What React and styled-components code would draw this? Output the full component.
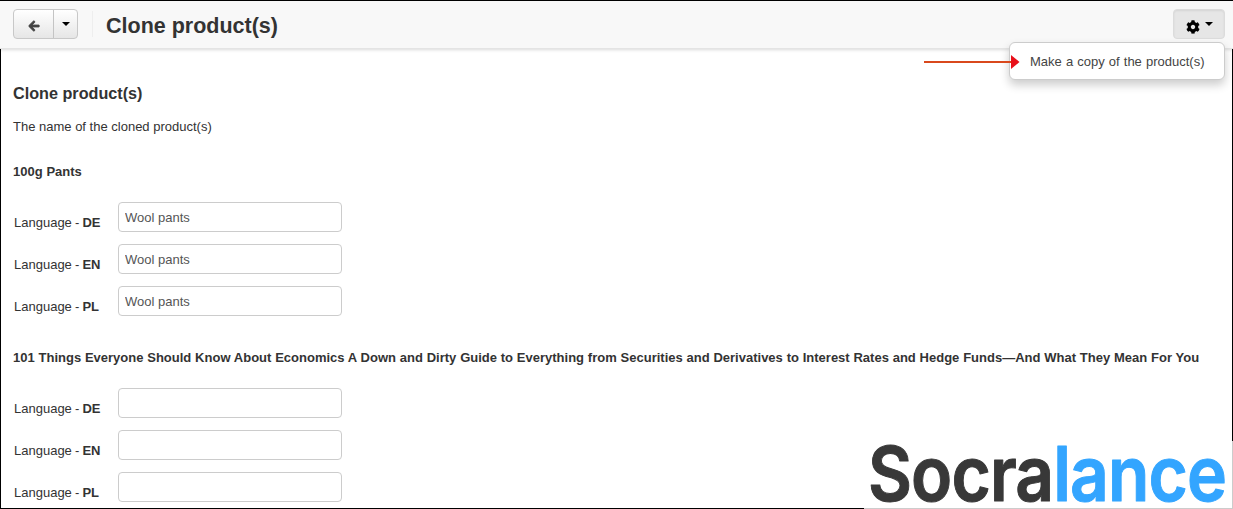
import React from 'react';
import styled, { createGlobalStyle } from 'styled-components';
import { FaArrowLeft, FaCog } from 'react-icons/fa';

const GlobalStyle = createGlobalStyle`
  html, body {
    margin: 0;
    padding: 0;
    background: #fff;
    overflow: hidden;
  }
  body {
    font-family: "Liberation Sans", Arial, sans-serif;
    font-size: 13px;
    color: #333;
  }
`;

const Frame = styled.div`
  position: relative;
  display: flex;
  flex-direction: column;
  box-sizing: border-box;
  width: 1233px;
  height: 509px;
  overflow: hidden;
  border-top: 1px solid #000;
  background: #fff;
`;

const Toolbar = styled.header`
  position: relative;
  display: flex;
  flex: none;
  align-items: center;
  box-sizing: border-box;
  height: 48px;
  padding: 0 8px 2px 13px;
  background: #f8f8f8;
  border-bottom: 1px solid #e4e4e4;
  box-shadow: 0 1px 3px rgba(0, 0, 0, 0.15);
`;

const ButtonGroup = styled.div`
  display: flex;
  height: 30px;
  border: 1px solid #c8c8c8;
  border-radius: 4px;
  box-sizing: border-box;
  overflow: hidden;
  background: linear-gradient(#fff, #e6e6e6);
`;

const GroupButton = styled.button`
  display: flex;
  align-items: center;
  justify-content: center;
  width: ${(p) => p.$width}px;
  padding: 0;
  border: 0;
  border-left: ${(p) => (p.$divided ? '1px solid #c4c4c4' : '0')};
  background: transparent;
  color: #444;
  font-size: 13px;
`;

const BackIcon = styled(FaArrowLeft)`
  margin-top: 5px;
  stroke: currentColor;
  stroke-width: 40px;
`;

const GearIcon = styled(FaCog)`
  margin-top: 6px;
`;

const Caret = styled.span`
  display: inline-block;
  width: 0;
  height: 0;
  border-left: 4px solid transparent;
  border-right: 4px solid transparent;
  border-top: 4px solid #000;
`;

const Divider = styled.span`
  width: 1px;
  height: 26px;
  margin: 0 13px 0 14px;
  background: #eee;
`;

const PageTitle = styled.h1`
  flex: 1;
  margin: 5px 0 0;
  font-size: 21.5px;
  line-height: 30px;
  font-weight: 700;
  color: #333;
`;

const ActionButton = styled.button`
  display: flex;
  align-items: center;
  justify-content: center;
  gap: 5px;
  box-sizing: border-box;
  width: 52px;
  height: 30px;
  margin-top: 1px;
  padding: 0;
  border: 1px solid #dcdcdc;
  border-radius: 4px;
  background: #e6e6e6;
  box-shadow: inset 0 1px 2px rgba(0, 0, 0, 0.08);
  color: #000;
`;

const Menu = styled.div`
  position: absolute;
  top: 41px;
  left: 1009px;
  box-sizing: border-box;
  width: 216px;
  height: 38px;
  padding: 0 20px;
  display: flex;
  align-items: center;
  background: #fff;
  border: 1px solid #ccc;
  border-radius: 6px;
  box-shadow: 0 5px 10px rgba(0, 0, 0, 0.2);
  color: #444;
  font-size: 13px;
  word-spacing: 0.5px;
  white-space: nowrap;
  z-index: 2;
`;

const Pointer = styled.svg`
  position: absolute;
  top: 51px;
  left: 923px;
  z-index: 3;
`;

const Content = styled.main`
  flex: 1;
  min-height: 0;
  overflow: hidden;
  padding: 0 12px;
  border-left: 1px solid #000;
  border-right: 1px solid #000;
  border-bottom: 1px solid #000;
`;

const Heading = styled.h3`
  margin: 34px 0 0;
  font-size: 16.2px;
  line-height: 20px;
  font-weight: 700;
`;

const Intro = styled.p`
  margin: 15px 0 0;
  line-height: 18px;
`;

const ProductName = styled.h4`
  margin: 27px 0 21px;
  font-size: 13px;
  line-height: 18px;
  font-weight: 700;
  word-spacing: 0.2px;
  white-space: nowrap;
`;

const Row = styled.div`
  display: flex;
  align-items: flex-start;
  height: 30px;
  margin-bottom: 12px;
`;

const Label = styled.label`
  width: 105px;
  padding: 13px 0 0 1px;
  box-sizing: border-box;
  line-height: 16px;
  word-spacing: -0.5px;
  b { font-weight: 700; }
`;

const TextInput = styled.input`
  box-sizing: border-box;
  width: 224px;
  height: 30px;
  padding: 0 6px;
  border: 1px solid #ccc;
  border-radius: 4px;
  background: #fff;
  color: #555;
  font-family: inherit;
  font-size: 13px;
  outline: none;
`;

const Group = styled.section`
  & + & ${ProductName} {
    margin-top: 33px;
  }
`;

const Watermark = styled.div`
  position: absolute;
  right: 0;
  bottom: 0;
  box-sizing: border-box;
  width: 369px;
  height: 68px;
  background: #fff;
  border-right: 1px solid #ccc;
  border-bottom: 1px solid #ccc;
  z-index: 4;
`;

const LogoText = styled.text`
  font-family: Inter, sans-serif;
  font-size: 76px;
  font-weight: 600;
  letter-spacing: -1px;
  stroke-width: 1px;
  stroke-linejoin: round;
`;

const LogoPart = styled.tspan`
  fill: ${(p) => p.$color};
  stroke: ${(p) => p.$color};
`;

const groups = [
  { name: '100g Pants', value: 'Wool pants' },
  {
    name: '101 Things Everyone Should Know About Economics A Down and Dirty Guide to Everything from Securities and Derivatives to Interest Rates and Hedge Funds—And What They Mean For You',
    value: '',
  },
];

const languages = ['DE', 'EN', 'PL'];

export default function App() {
  return (
    <>
      <GlobalStyle />
      <Frame>
        <Toolbar>
          <ButtonGroup>
            <GroupButton $width={39}>
              <BackIcon size={12} />
            </GroupButton>
            <GroupButton $width={24} $divided>
              <Caret />
            </GroupButton>
          </ButtonGroup>
          <Divider />
          <PageTitle>Clone product(s)</PageTitle>
          <ActionButton>
            <GearIcon size={14} />
            <Caret />
          </ActionButton>
        </Toolbar>

        <Menu>Make a copy of the product(s)</Menu>
        <Pointer width="98" height="20" viewBox="0 0 98 20">
          <rect x="1" y="9" width="87" height="2" fill="#d9481c" />
          <path d="M88 3 L96.5 10 L88 17 Z" fill="#e8101a" />
        </Pointer>

        <Content>
          <Heading>Clone product(s)</Heading>
          <Intro>The name of the cloned product(s)</Intro>
          {groups.map((group) => (
            <Group key={group.name}>
              <ProductName>{group.name}</ProductName>
              {languages.map((lang) => (
                <Row key={lang}>
                  <Label>
                    Language - <b>{lang}</b>
                  </Label>
                  <TextInput defaultValue={group.value} />
                </Row>
              ))}
            </Group>
          ))}
        </Content>

        <Watermark>
          <svg width="368" height="67" viewBox="0 0 368 67">
            <LogoText x="4" y="60" textLength="358" lengthAdjust="spacingAndGlyphs">
              <LogoPart $color="#383838">Socra</LogoPart>
              <LogoPart $color="#33a5ff">lance</LogoPart>
            </LogoText>
          </svg>
        </Watermark>
      </Frame>
    </>
  );
}
